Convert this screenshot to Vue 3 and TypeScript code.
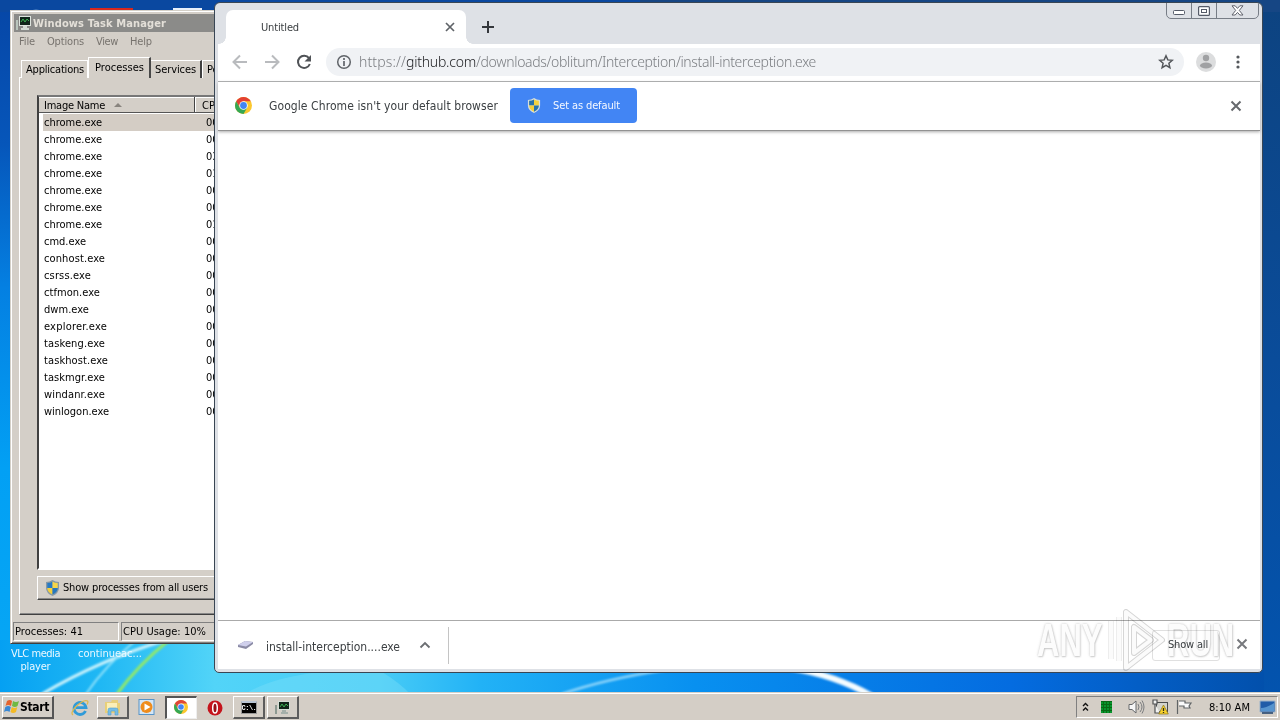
<script setup lang="ts">
import type { Directive } from 'vue'

// Spreads the letters of a label over a fixed advance width.
const vFit: Directive<HTMLElement, number> = {
  mounted(el, binding) {
    const length = (el.textContent ?? '').trim().length
    const natural = el.getBoundingClientRect().width
    if (length > 0) el.style.letterSpacing = `${(binding.value - natural) / length}px`
  },
}

interface Process { name: string; cpu: string; width: number; selected?: boolean }

const processes: Process[] = [
  { name: 'chrome.exe', cpu: '00', width: 58, selected: true },
  { name: 'chrome.exe', cpu: '00', width: 58 },
  { name: 'chrome.exe', cpu: '03', width: 58 },
  { name: 'chrome.exe', cpu: '01', width: 58 },
  { name: 'chrome.exe', cpu: '00', width: 58 },
  { name: 'chrome.exe', cpu: '00', width: 58 },
  { name: 'chrome.exe', cpu: '01', width: 58 },
  { name: 'cmd.exe', cpu: '00', width: 42 },
  { name: 'conhost.exe', cpu: '00', width: 61 },
  { name: 'csrss.exe', cpu: '00', width: 47 },
  { name: 'ctfmon.exe', cpu: '00', width: 56 },
  { name: 'dwm.exe', cpu: '00', width: 45 },
  { name: 'explorer.exe', cpu: '00', width: 63 },
  { name: 'taskeng.exe', cpu: '00', width: 61 },
  { name: 'taskhost.exe', cpu: '00', width: 64 },
  { name: 'taskmgr.exe', cpu: '00', width: 61 },
  { name: 'windanr.exe', cpu: '00', width: 61 },
  { name: 'winlogon.exe', cpu: '00', width: 65 },
]
</script>

<template>
  <div class="desktop">
    <svg class="wallpaper" viewBox="0 0 1280 720">
      <defs>
        <linearGradient id="left" x1="0" y1="0" x2="0" y2="1">
          <stop offset="0" stop-color="#0646a6" />
          <stop offset=".2" stop-color="#0656ba" />
          <stop offset=".4" stop-color="#0480e2" />
          <stop offset=".65" stop-color="#02a0f4" />
          <stop offset="1" stop-color="#08a8f4" />
        </linearGradient>
        <linearGradient id="right" x1="0" y1="0" x2="0" y2="1">
          <stop offset="0" stop-color="#0d4380" />
          <stop offset=".5" stop-color="#0a4c9a" />
          <stop offset="1" stop-color="#0254b0" />
        </linearGradient>
        <linearGradient id="floor" x1="0" y1="0" x2="1" y2="0">
          <stop offset="0" stop-color="#05a0f2" />
          <stop offset=".08" stop-color="#20b8f4" />
          <stop offset=".17" stop-color="#52d4f8" />
          <stop offset=".3" stop-color="#48ccf6" />
          <stop offset=".38" stop-color="#22b2f6" />
          <stop offset=".55" stop-color="#0890f0" />
          <stop offset=".8" stop-color="#046ce0" />
          <stop offset="1" stop-color="#0250ac" />
        </linearGradient>
        <filter id="soft"><feGaussianBlur stdDeviation=".8" /></filter>
      </defs>
      <rect width="640" height="720" fill="url(#left)" />
      <rect x="640" width="640" height="720" fill="url(#right)" />
      <rect width="1280" height="12" fill="#0a48a0" />
      <rect x="640" width="640" height="12" fill="#164684" />
      <rect y="640" width="1264" height="60" fill="url(#floor)" />
      <rect x="90" y="8" width="43" height="4" fill="#d8281c" />
      <rect x="173" y="8" width="29" height="3" fill="#e8f0fa" />
      <path d="M26 12q10-5 20 0" fill="#6b99d4" />
      <g fill="none" filter="url(#soft)">
        <path d="M42 694Q100 660 166 640" stroke="#c9f2fb" stroke-width="3" />
        <path d="M86 694Q105 666 135 641" stroke="#8fe2fa" stroke-width="2" />
        <path d="M117 694Q138 665 168 641" stroke="#91e96b" stroke-width="3" />
        <path d="M562 694Q605 679 665 670" stroke="#8fd6fb" stroke-width="2.500" />
        <path d="M790 668Q835 675 872 696" stroke="#f4fcff" stroke-width="6" />
      </g>
      <path d="M245 694Q270 678 320 672H382Q400 683 410 694Z" fill="#83e2fa" opacity=".35" />
    </svg>

    <div class="shortcut vlc"><span v-fit="49">VLC media</span><span v-fit="30">player</span></div>
    <div class="shortcut continue"><span v-fit="64">continueac...</span></div>

    <section class="taskmgr">
      <div class="tm-title">
        <svg width="17" height="16" viewBox="0 0 17 16">
          <path d="M1 5h2v10H1z" fill="#b9c5bd" />
          <rect x="4" y="1" width="12" height="10" fill="#dfe5df" />
          <rect x="5" y="2" width="10" height="8" fill="#10251a" />
          <path d="M6 7l2-3 2 3 2-3 2 2" stroke="#3bb252" fill="none" />
          <path d="M8 11h4v2h2v2H6v-2h2z" fill="#d4dcd5" />
        </svg>
        <b v-fit="133">Windows Task Manager</b>
      </div>
      <nav class="tm-menu">
        <span v-fit="16">File</span><span v-fit="37">Options</span><span v-fit="22">View</span><span v-fit="22">Help</span>
      </nav>
      <div class="tm-tabs">
        <div class="tm-tab first"><span v-fit="58">Applications</span></div>
        <div class="tm-tab active"><span v-fit="49">Processes</span></div>
        <div class="tm-tab services"><span v-fit="41">Services</span></div>
        <div class="tm-tab last"><span>Performance</span></div>
      </div>
      <div class="tm-panel">
        <div class="tm-list">
          <div class="tm-head">
            <div class="col-name"><span v-fit="61">Image Name</span><i class="sort"></i></div>
            <div class="col-cpu">CPU</div>
          </div>
          <div v-for="(p, i) in processes" :key="i" class="tm-row" :class="{ selected: p.selected }">
            <span class="name"><span v-fit="p.width">{{ p.name }}</span></span><span class="cpu">{{ p.cpu }}</span>
          </div>
        </div>
        <div class="tm-button">
          <svg width="15" height="16" viewBox="0 0 14 16">
            <path d="M7 0q3 2 6.500 2v6q0 5-6.500 8Q.5 13 .5 8V2Q4 2 7 0z" fill="#8798a5" />
            <path d="M7 1.500V8H1.800V3Q5 3 7 1.500z" fill="#277ac4" />
            <path d="M7 1.500V8h5.200V3Q9 3 7 1.500z" fill="#f7d648" />
            <path d="M7 8v6.600Q1.800 12 1.800 8z" fill="#f4cf3b" />
            <path d="M7 8v6.600Q12.200 12 12.200 8z" fill="#2677bd" />
          </svg>
          <span v-fit="145">Show processes from all users</span>
        </div>
      </div>
      <footer class="tm-status">
        <div class="pane small"><span v-fit="68">Processes: 41</span></div>
        <div class="pane"><span v-fit="83">CPU Usage: 10%</span></div>
      </footer>
    </section>

    <section class="chrome">
      <div class="caption">
        <div class="cap"><svg width="13" height="6"><rect x=".5" y=".5" width="11" height="4" rx="1" fill="#fff" stroke="#555b68" /></svg></div>
        <div class="cap"><svg width="12" height="10"><rect x=".6" y=".6" width="10.800" height="8.800" rx="1" fill="#fff" stroke="#555b68" stroke-width="1.200" /><rect x="3.500" y="3.500" width="5" height="3" fill="#fff" stroke="#555b68" /></svg></div>
        <div class="cap wide"><svg width="13" height="11" viewBox="0 0 13 11"><path d="M1 .8h3.200l2.300 2.600L8.800.8H12L8.300 5.400 12 10H8.800L6.500 7.400 4.200 10H1l3.700-4.600z" fill="#fff" stroke="#60636d" /></svg></div>
      </div>
      <div class="tabstrip">
        <div class="tab">
          <span v-fit="38">Untitled</span>
          <svg width="10" height="10" viewBox="0 0 10 10"><path d="M1 1l8 8M9 1L1 9" stroke="#5f6368" stroke-width="1.700" /></svg>
        </div>
        <svg class="plus" width="12" height="12" viewBox="0 0 12 12"><path d="M6 0v12M0 6h12" stroke="#34373c" stroke-width="2" /></svg>
      </div>
      <div class="toolbar">
        <svg class="nav" width="16" height="16" viewBox="0 0 16 16"><path d="M15 8H2M8 1.500L1.500 8 8 14.500" fill="none" stroke="#b9bbbe" stroke-width="2" /></svg>
        <svg class="nav" width="16" height="16" viewBox="0 0 16 16"><path d="M1 8h13M8 1.500L14.500 8 8 14.500" fill="none" stroke="#b9bbbe" stroke-width="2" /></svg>
        <svg class="nav" width="16" height="16" viewBox="0 0 16 16"><path d="M13 4.200A6.100 6.100 0 1 0 13.800 10" fill="none" stroke="#505357" stroke-width="2" /><path d="M15 1v6.500H8.500z" fill="#505357" /></svg>
        <div class="omnibox">
          <svg width="16" height="16" viewBox="0 0 16 16"><circle cx="8" cy="8" r="6.300" fill="none" stroke="#606469" stroke-width="1.500" /><path d="M8 7v5M8 4v2" stroke="#606469" stroke-width="1.700" /></svg>
          <span class="url"><span v-fit="47">https://</span><span v-fit="70" class="host">github.com</span><span v-fit="340">/downloads/oblitum/Interception/install-interception.exe</span></span>
          <svg class="star" width="16" height="16" viewBox="0 0 16 16"><path d="M8 1.800l1.800 4.100 4.500.4-3.400 3 1 4.400L8 11.400l-3.900 2.300 1-4.400-3.400-3 4.500-.4z" fill="none" stroke="#54575b" stroke-width="1.500" /></svg>
        </div>
        <svg class="avatar" width="20" height="20" viewBox="0 0 20 20"><circle cx="10" cy="10" r="10" fill="#dcddde" /><circle cx="10" cy="6" r="3.200" fill="#a0a1a3" /><ellipse cx="10" cy="13.500" rx="6" ry="3" fill="#a0a1a3" /></svg>
        <svg class="dots" width="4" height="14" viewBox="0 0 4 14"><circle cx="2" cy="2" r="1.600" fill="#55585c" /><circle cx="2" cy="7" r="1.600" fill="#55585c" /><circle cx="2" cy="12" r="1.600" fill="#55585c" /></svg>
      </div>
      <div class="infobar">
        <svg class="logo" width="17" height="17" viewBox="0 0 20 20">
          <circle cx="10" cy="10" r="10" fill="#fbc72e" />
          <path d="M1.340 5A10 10 0 0 1 18.660 5H10L5.700 12.500z" fill="#e34133" />
          <path d="M1.340 5A10 10 0 0 0 10 20l4.300-7.500H5.700z" fill="#35a853" />
          <circle cx="10" cy="10" r="5" fill="#fff" /><circle cx="10" cy="10" r="4" fill="#4285f4" />
        </svg>
        <span class="message" v-fit="229">Google Chrome isn't your default browser</span>
        <div class="default-btn">
          <svg width="14" height="15" viewBox="0 0 14 16">
            <path d="M7 0q3 2 6.500 2v6q0 5-6.500 8Q.5 13 .5 8V2Q4 2 7 0z" fill="#d7dfdb" />
            <path d="M7 1.500V8H1.800V3Q5 3 7 1.500z" fill="#2873a9" />
            <path d="M7 1.500V8h5.200V3Q9 3 7 1.500z" fill="#f4d33e" />
            <path d="M7 8v6.600Q1.800 12 1.800 8z" fill="#f4cf3b" />
            <path d="M7 8v6.600Q12.200 12 12.200 8z" fill="#2873a9" />
          </svg>
          <span v-fit="67">Set as default</span>
        </div>
        <svg class="close" width="12" height="12" viewBox="0 0 12 12"><path d="M1.500 1.500l9 9M10.500 1.500l-9 9" stroke="#66696d" stroke-width="2" /></svg>
      </div>
      <main class="page"></main>
      <div class="shelf">
        <div class="download">
          <svg width="16" height="12" viewBox="0 0 16 12"><path d="M0 6l7-4 8 1v2l-7 5-8-2z" fill="#8b8ba5" /><path d="M0 6l7-4 8 1-7 4.500z" fill="#d0d0ec" /></svg>
          <span v-fit="134">install-interception....exe</span>
          <svg class="chev" width="12" height="8" viewBox="0 0 12 8"><path d="M1.500 6.500L6 2l4.500 4.500" fill="none" stroke="#6b6e72" stroke-width="1.800" /></svg>
        </div>
        <div class="show-all"><span v-fit="40">Show all</span></div>
        <svg class="close" width="12" height="12" viewBox="0 0 12 12"><path d="M1.500 1.500l9 9M10.500 1.500l-9 9" stroke="#77797d" stroke-width="2" /></svg>
      </div>
    </section>

    <div class="watermark">
      <span class="wm-any">ANY</span>
      <svg width="60" height="66" viewBox="0 0 60 66">
        <g fill="none" stroke-linejoin="round">
          <path d="M4 14v38M12 10v44" stroke="#cfcfcf" stroke-width="5" />
          <path d="M19 5v56l36-28zM27 20v26l17-13z" stroke="#c8c8c8" stroke-width="6" />
          <path d="M4 14v38M12 10v44M19 5v56l36-28zM27 20v26l17-13z" stroke="#fafafa" stroke-width="4" />
        </g>
      </svg>
      <span class="wm-run">RUN</span>
    </div>

    <footer class="taskbar">
      <div class="start">
        <svg width="16" height="16" viewBox="0 0 16 16">
          <path d="M3 2q3-2 5 0L7 7Q4 5 1.500 7z" fill="#e4632d" />
          <path d="M9 2q3 2 6 0l-1.500 5Q11 9 8 7z" fill="#70b944" />
          <path d="M1.300 8q3-2 5.500 0l-1.300 5Q3 11 0 13z" fill="#3988d4" />
          <path d="M7.800 8q3 2 5.500 0L12 13q-3 2-5.500 0z" fill="#f4ba25" />
        </svg>
        <b v-fit="29">Start</b>
      </div>
      <div class="task ie">
        <svg width="18" height="18" viewBox="0 0 18 18"><path d="M14.500 12A6 6 0 1 1 15 8.600H5" fill="none" stroke="#319bd8" stroke-width="2.800" /><path d="M2 16Q-1 14 5 7.500 13 0 16.500 2q1 1-.5 3.500" fill="none" stroke="#ddb84d" stroke-width="1.300" /></svg>
      </div>
      <div class="task raised">
        <svg width="18" height="17" viewBox="0 0 18 17"><path d="M1 3h6l1-2h6v3h2v10H1z" fill="#e8cf79" /><path d="M3 4h10v8H3z" fill="#fbefb7" /><path d="M4 16v-5q0-2 2-2h6q2 0 2 2v5h-3v-4H7v4z" fill="#75bde5" stroke="#519dcd" stroke-width=".6" /></svg>
      </div>
      <div class="task">
        <svg width="18" height="17" viewBox="0 0 18 17"><rect x="1" y=".5" width="15" height="15" fill="#d4e6f6" stroke="#5794c8" /><circle cx="8.500" cy="8" r="6" fill="#ef8c1c" /><path d="M6.500 4.500v7l6-3.500z" fill="#fff" /></svg>
      </div>
      <div class="task pressed">
        <svg width="14" height="14" viewBox="0 0 20 20">
          <circle cx="10" cy="10" r="10" fill="#fbc72e" />
          <path d="M1.340 5A10 10 0 0 1 18.660 5H10L5.700 12.500z" fill="#df4638" />
          <path d="M1.340 5A10 10 0 0 0 10 20l4.300-7.500H5.700z" fill="#35a853" />
          <circle cx="10" cy="10" r="5" fill="#fff" /><circle cx="10" cy="10" r="4" fill="#4285f4" />
        </svg>
      </div>
      <div class="task">
        <svg width="16" height="16" viewBox="0 0 16 16"><circle cx="8" cy="8" r="7.500" fill="#c5141c" /><ellipse cx="8" cy="8" rx="2.300" ry="5" fill="#991016" stroke="#fff" stroke-width="1.500" /></svg>
      </div>
      <div class="task raised cmd">
        <div class="cmd-icon">C:\.</div>
      </div>
      <div class="task raised">
        <svg width="17" height="15" viewBox="0 0 17 15"><path d="M1 5h2v9H1z" fill="#8d9991" /><rect x="4" y="1" width="12" height="9" fill="#d4ded6" /><rect x="5" y="2" width="10" height="7" fill="#10251a" /><path d="M6 7l2-3 2 3 2-3 2 2" stroke="#3bb252" fill="none" /><path d="M8 10h4v2h2v2H7v-2h1z" fill="#a5afa9" /></svg>
      </div>
      <div class="tray">
        <svg class="up" width="7" height="10" viewBox="0 0 7 10"><path d="M1 4l2.500-2.500L6 4M1 8.500L3.500 6 6 8.500" fill="none" stroke="#111" stroke-width="1.400" /></svg>
        <div class="meter"></div>
        <svg class="speaker" width="17" height="16" viewBox="0 0 17 16"><path d="M1 5.500h3L8 2v12l-4-3.500H1z" fill="#f6f6f6" stroke="#66686a" /><path d="M10 5q2 3 0 6M12 3q4 5 0 10M14 1.500q4 6.500 0 13" fill="none" stroke="#7a7c7e" /></svg>
        <svg class="net" width="17" height="17" viewBox="0 0 17 17"><rect x="4.500" y="3.500" width="11" height="9" fill="#d3d3cd" stroke="#494b4c" /><path d="M1 1h4v4H1zM3 5v9h5" fill="#f2f2f0" stroke="#505254" stroke-width="1.200" /><path d="M11.500 6l4.800 9H6.700z" fill="#f7d12c" stroke="#8b7414" stroke-width=".7" /><path d="M11.500 9v3M11.500 13v1" stroke="#2d2a18" stroke-width="1.300" /></svg>
        <svg class="flag" width="17" height="16" viewBox="0 0 17 16"><path d="M1.500 1v14M3 2h6v2h6l-2 3 1 2H8V7H3" fill="#fafafa" stroke="#606466" stroke-width="1.200" /></svg>
        <span class="clock" v-fit="41">8:10 AM</span>
        <svg class="screen" width="17" height="14" viewBox="0 0 17 14"><path d="M1 1h15v11H1z" fill="#205ca8" stroke="#9db4ca" /><path d="M2 8Q8 8 15 3v8H2z" fill="#5694ce" /><path d="M3 13h11" stroke="#1d3e69" stroke-width="1.500" /></svg>
      </div>
    </footer>
  </div>
</template>

<style>
html, body { margin: 0; overflow: hidden; }
</style>

<style scoped>
* { box-sizing: border-box; }
svg { display: block; flex: none; }
.desktop { position: relative; width: 1280px; height: 720px; overflow: hidden; font: 11px/16px "DejaVu Sans Condensed", "DejaVu Sans", sans-serif; font-stretch: condensed; color: #000; white-space: nowrap; }
.wallpaper { position: absolute; inset: 0; width: 1280px; height: 720px; }
.desktop span, .desktop b { display: inline-block; flex: none; }

.shortcut { position: absolute; display: flex; flex-direction: column; align-items: center; color: #eaf8ff; line-height: 13px; top: 647px; }
.vlc { left: 11px; }
.continue { left: 78px; }

.taskmgr { position: absolute; z-index: 0; left: 10px; top: 10px; width: 420px; height: 634px; padding: 3px; background: #d4cfc8; border: 1px solid #3f3f3f; border-left-color: #d4d0c8; border-top-color: #d4d0c8; box-shadow: inset 1px 1px #fff, inset -1px -1px #808080; overflow: hidden; display: flex; flex-direction: column; }
.taskmgr > * { flex: none; }
.tm-title { height: 18px; background: #8b8b89; display: flex; align-items: center; color: #e3dfd8; padding-left: 1px; gap: 1px; }
.tm-title b { font-size: 11px; margin-top: 1px; }
.tm-menu { height: 20px; display: flex; gap: 12px; padding-left: 5px; color: #77736e; line-height: 20px; }
.tm-tabs { height: 25px; margin-left: 7px; display: flex; align-items: flex-end; margin-top: 1px; position: relative; z-index: 1; }
.tm-tab { height: 18px; border: 1px solid #fff; border-right-color: #404040; border-bottom: 0; padding-left: 4px; line-height: 18px; background: #d4cfc8; }
.tm-tab.first { width: 67px; border-right-color: #fff; }
.tm-tab.active { width: 63px; height: 21px; line-height: 19px; padding-left: 6px; border-right: 2px solid #484848; }
.tm-tab.services { width: 51px; padding-left: 4px; border-left: 0; border-right-width: 2px; }
.tm-tab.last { width: 80px; }
.tm-panel { margin: -1px 0 0 5px; height: 538px; border: 1px solid #fff; border-bottom-color: #404040; box-shadow: inset 0 -1px #888; padding: 17px 0 0 17px; }
.tm-list { width: 360px; height: 475px; background: #fff; border: 2px solid #404040; border-color: #777 #fff #fff #404040; }
.tm-head { height: 16px; display: flex; background: #d4cfc8; border-bottom: 1px solid #555; box-shadow: inset 0 1px #fff; line-height: 17px; margin-bottom: 1px; }
.col-name { width: 156px; padding-left: 5px; border-right: 1px solid #444; display: flex; }
.sort { width: 0; height: 0; border: 4px solid transparent; border-top: 0; border-bottom-color: #88847e; margin: 6px 0 0 9px; }
.col-cpu { padding-left: 6px; border-left: 1px solid #fff; }
.tm-row { height: 17px; display: flex; padding-left: 5px; line-height: 18px; }
.tm-row.selected { background: #d4cdc5; margin-left: 4px; padding-left: 1px; }
.tm-row .name { width: 162px; }
.tm-button { width: 210px; height: 24px; margin-top: 6px; border: 1px solid #fff; border-bottom-color: #404040; box-shadow: inset 0 -1px #888; display: flex; align-items: center; padding-left: 7px; gap: 3px; }
.tm-status { display: flex; gap: 2px; margin: 7px 0 0 -1px; height: 19px; }
.pane { width: 280px; border: 1px solid #808080; border-right-color: #fff; border-bottom-color: #fff; padding-left: 1px; line-height: 18px; }
.pane.small { width: 106px; }

.chrome { position: absolute; left: 214px; top: 2px; width: 1049px; height: 671px; border: 1px solid #394654; border-radius: 6px 6px 5px 5px; background: #dee1e6; padding: 0 2px 3px 3px; color: #3c4043; display: flex; flex-direction: column; overflow: hidden; }
.caption { position: absolute; right: 3px; top: -1px; height: 17px; display: flex; border: 1px solid #777d86; border-radius: 0 0 5px 5px; }
.cap { width: 25px; display: flex; align-items: center; justify-content: center; border-right: 1px solid #777d86; }
.cap:first-child { padding-top: 4px; }
.cap.wide { width: 41px; border-right: 0; }
.tabstrip { height: 41px; display: flex; padding: 7px 0 0 8px; }
.tab { position: relative; width: 240px; height: 34px; background: #fff; border-radius: 7px 7px 0 0; display: flex; align-items: center; justify-content: space-between; padding: 0 11px 0 35px; }
.tab span { margin-top: 1px; }
.tab::before, .tab::after { content: ""; position: absolute; bottom: 0; width: 7px; height: 7px; }
.tab::before { left: -7px; background: radial-gradient(circle at 0 0, transparent 6.500px, #fff 7px); }
.tab::after { right: -7px; background: radial-gradient(circle at 100% 0, transparent 6.500px, #fff 7px); }
.plus { margin: 11px 0 0 16px; }
.toolbar { height: 38px; background: #fff; display: flex; align-items: center; padding: 0 0 1px 14px; border-bottom: 1px solid #adaeaf; }
.nav { margin-right: 16px; }
.omnibox { width: 858px; height: 28px; margin-left: -2px; border-radius: 14px; background: #f0f2f5; display: flex; align-items: center; padding-left: 10px; }
.url { font-size: 14px; color: #7b7e82; margin-left: 7px; font-family: "Noto Sans", sans-serif; font-weight: 300; }
.host { color: #202124; }
.star { margin: 0 10px 0 auto; }
.avatar { margin-left: 12px; }
.dots { margin-left: 20px; }
.infobar { height: 49px; background: #fff; display: flex; align-items: center; padding: 0 18px 1px 17px; border-bottom: 1px solid #929292; box-shadow: 0 1px 3px #aaa; position: relative; z-index: 1; }
.message { font-size: 12px; margin-left: 17px; }
.default-btn { width: 127px; height: 35px; margin: 0 0 1px 12px; border-radius: 4px; background: #4285f4; color: #f5f9ff; display: flex; align-items: center; padding-left: 17px; gap: 12px; }
.default-btn span { margin-top: 1px; }
.infobar .close { margin-left: auto; }
.page { flex: 1; background: #fff; }
.shelf { height: 49px; background: #fff; border-top: 1px solid #aaa; display: flex; align-items: center; padding-right: 12px; }
.download { height: 37px; width: 231px; border-right: 1px solid #c4c4c4; display: flex; align-items: center; padding-left: 20px; font-size: 12px; }
.download span { margin: 3px 0 0 12px; }
.download .chev { margin-left: 19px; }
.show-all { width: 68px; height: 31px; margin: 0 16px 0 auto; border: 1px solid #e0e0e0; border-radius: 3px; display: flex; align-items: center; padding-left: 15px; }
.shelf > .close { margin-bottom: 2px; }

.watermark { position: absolute; left: 1037px; top: 607px; height: 66px; display: flex; align-items: center; opacity: .75; mix-blend-mode: multiply; font: 47px/50px "Liberation Sans", Arial, sans-serif; font-weight: bold; color: #fbfbfb; text-shadow: 0 0 3px #aaa, 1px 1px 2px #c4c4c4; pointer-events: none; }
.watermark span { transform-origin: 0 50%; transform: scaleX(.66); }
.wm-any { width: 70px; }
.wm-run { width: 74px; }

.taskbar { position: absolute; left: 0; top: 692px; width: 1280px; height: 28px; border-top: 1px solid #d4d0c8; box-shadow: inset 0 1px #fff; background: #d4cec6; display: flex; align-items: flex-start; padding: 3px 2px 0; }
.start { width: 52px; height: 23px; border: 1px solid #fff; border-right: 2px solid #555; border-bottom: 2px solid #555; display: flex; align-items: center; padding-left: 1px; font-size: 12px; }
.task { width: 32px; height: 23px; margin-right: 2px; display: flex; align-items: center; justify-content: center; }
.ie { margin-left: 9px; padding-left: 2px; }
.raised { border: 1px solid #fff; border-right: 2px solid #5c5c5c; border-bottom: 2px solid #5c5c5c; }
.pressed { background: #fff; border: 2px solid #555; border-right: 1px solid #eee; border-bottom: 1px solid #eee; padding: 0 2px 2px 0; }
.cmd-icon { width: 16px; height: 13px; background: #000; border: 1px solid #9a9a9a; border-top: 2px solid #b9c5d4; color: #fff; font: bold 7px/10px "Liberation Mono", monospace; text-align: center; overflow: hidden; letter-spacing: -.5px; }
.tray { width: 202px; height: 22px; margin-left: auto; border: 1px solid #808080; border-right-color: #fff; border-bottom-color: #fff; display: flex; align-items: center; padding-left: 5px; }
.meter { flex: none; width: 11px; height: 12px; margin-left: 12px; background: repeating-linear-gradient(90deg, transparent 0 2px, #096b12 2px 3px), repeating-linear-gradient(0deg, #07952d 0 2px, #056714 2px 3px); }
.speaker { margin-left: 16px; }
.net { margin-left: 7px; }
.flag { margin-left: 7px; }
.clock { margin: 1px 0 0 16px; }
.screen { margin-left: 9px; }
</style>
